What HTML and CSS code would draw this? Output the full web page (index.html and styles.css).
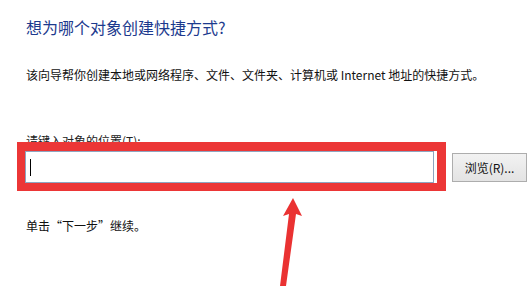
FILE: index.html
```html
<!DOCTYPE html>
<html lang="zh-CN">
<head>
<meta charset="utf-8">
<link rel="stylesheet" href="styles.css">
</head>
<body>
<div class="page">
  <h1 class="title">想为哪个对象创建快捷方式?</h1>
  <p class="desc">该向导帮你创建本地或网络程序、文件、文件夹、计算机或 Internet 地址的快捷方式。</p>
  <label class="label" for="loc">请键入对象的位置(T):</label>
  <div class="row">
    <div class="input" id="loc"><span class="caret"></span></div>
    <button class="btn">浏览(R)...</button>
  </div>
  <p class="hint">单击“下一步”继续。</p>
</div>
<div class="highlight"></div>
<svg class="arrow" width="531" height="286" viewBox="0 0 531 286">
  <polygon points="293,198 302,216 296,214 286,286 280,286 289,214 283,216" fill="#ea3232"/>
</svg>
</body>
</html>
```
FILE: styles.css
```css
html, body {
  margin: 0;
  padding: 0;
  background: #ffffff;
  width: 531px;
  height: 286px;
  overflow: hidden;
  position: relative;
  font-family: "Noto Sans CJK SC", "Noto Sans", sans-serif;
  color: #111111;
}
.page {
  padding: 17px 0 0 26px;
  display: flex;
  flex-direction: column;
  align-items: flex-start;
}
.title {
  margin: 0;
  font-size: 16px;
  line-height: 20px;
  font-weight: normal;
  color: #1c3a8e;
}
.desc {
  margin: 30px 0 0;
  font-size: 12px;
  line-height: 16px;
}
.label {
  margin-top: 50px;
  font-size: 12px;
  line-height: 16px;
  color: #222;
}
.row {
  margin: 2px 0 0 -1px;
  display: flex;
  align-items: flex-start;
  gap: 18px;
}
.input {
  width: 409px;
  height: 32px;
  box-sizing: border-box;
  border: 1px solid #8ea5c0;
  background: #fff;
  display: flex;
  align-items: center;
  padding-left: 4px;
}
.caret {
  width: 1px;
  height: 17px;
  background: #000;
}
.btn {
  margin-top: 2px;
  width: 75px;
  height: 29px;
  box-sizing: border-box;
  border: 1px solid #adadad;
  background: linear-gradient(#f2f2f2, #e3e3e3);
  font-family: inherit;
  font-size: 12px;
  color: #111;
  padding: 0;
}
.hint {
  margin: 35px 0 0;
  font-size: 12px;
  line-height: 16px;
}
.highlight {
  position: absolute;
  left: 17px;
  top: 142px;
  width: 429px;
  height: 49px;
  box-sizing: border-box;
  border-style: solid;
  border-color: #ec3636;
  border-width: 9px 9px 8px 8px;
}
.arrow {
  position: absolute;
  left: 0;
  top: 0;
}
```
